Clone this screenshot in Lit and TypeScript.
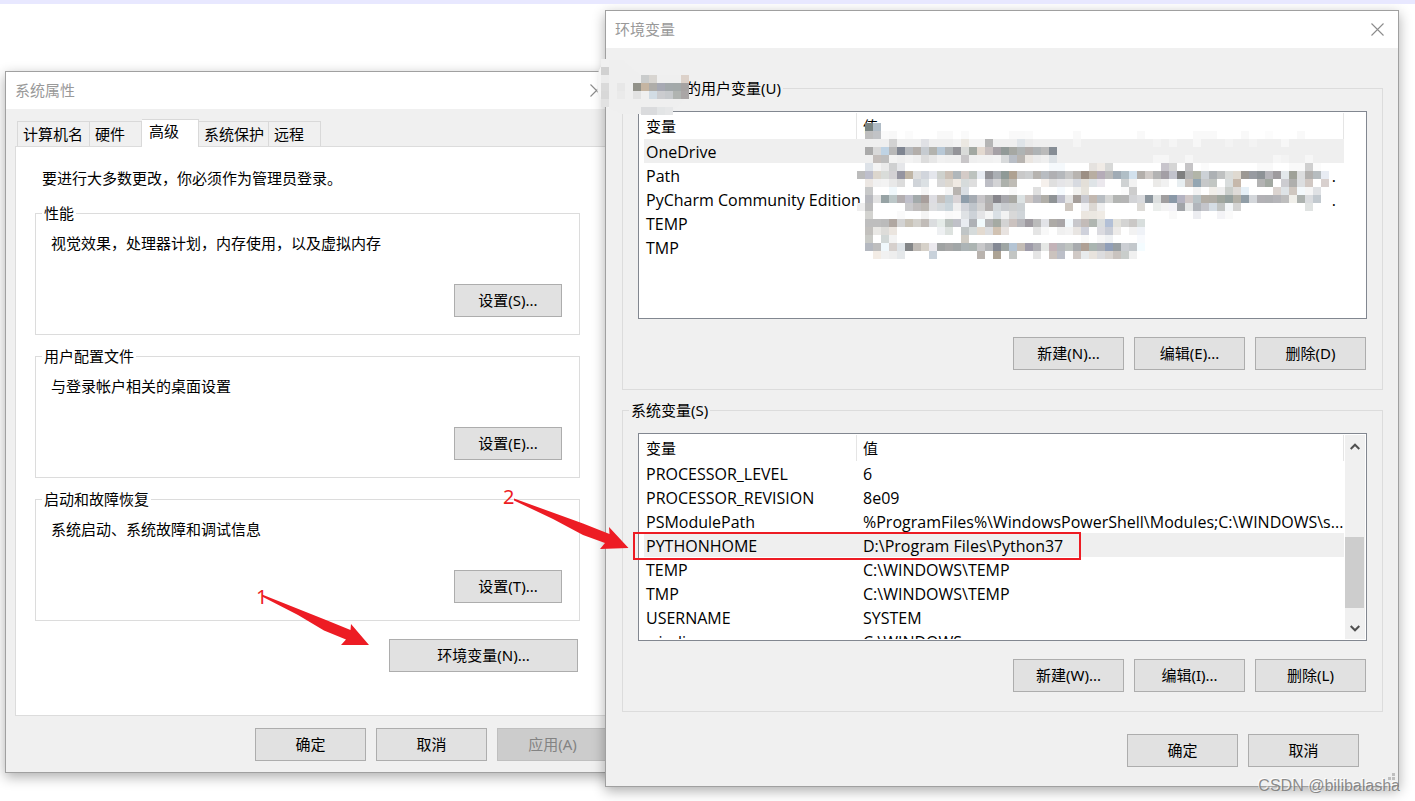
import { LitElement, html, svg, css } from "lit";
import { customElement, property } from "lit/decorators.js";
import { classMap } from "lit/directives/class-map.js";

interface Row {
  name: string;
  value: string;
  selected?: boolean;
  cut?: boolean;
}

const USER_ROWS: Row[] = [
  { name: "OneDrive", value: "", selected: true },
  { name: "Path", value: ".", cut: true },
  { name: "PyCharm Community Edition", value: ".", cut: true },
  { name: "TEMP", value: "" },
  { name: "TMP", value: "" },
];

const SYSTEM_ROWS: Row[] = [
  { name: "PROCESSOR_LEVEL", value: "6" },
  { name: "PROCESSOR_REVISION", value: "8e09" },
  { name: "PSModulePath", value: "%ProgramFiles%\\WindowsPowerShell\\Modules;C:\\WINDOWS\\s..." },
  { name: "PYTHONHOME", value: "D:\\Program Files\\Python37", selected: true },
  { name: "TEMP", value: "C:\\WINDOWS\\TEMP" },
  { name: "TMP", value: "C:\\WINDOWS\\TEMP" },
  { name: "USERNAME", value: "SYSTEM" },
  { name: "windir", value: "C:\\WINDOWS" },
];

const TABS = ["计算机名", "硬件", "高级", "系统保护", "远程"];

const SECTIONS = [
  { title: "性能", text: "视觉效果，处理器计划，内存使用，以及虚拟内存", action: "设置(S)..." },
  { title: "用户配置文件", text: "与登录帐户相关的桌面设置", action: "设置(E)..." },
  { title: "启动和故障恢复", text: "系统启动、系统故障和调试信息", action: "设置(T)..." },
];

// Redaction mosaics: one string per row of 8px cells, "column:colour".
const VALUE_MOSAIC = [
  "0:7a8483 1:b0bcc6",
  "0:bebebe 1:c1c3c6 2:fafafa 3:f8f8f8 5:fbfbfb 9:f9f9f9 10:f9f9f9 12:fafafa 18:f9f9f9 19:f9f9f9 20:fafafa 26:f9f9f9 34:f9f9f9 41:f9f9f9 42:f9f9f9 43:f9f9f9 47:f9f9f9 50:fcfcfc 54:f9f9f9",
  "3:d2d2d2 7:e0e1e5 11:f3f3f3 12:ebe8e2 13:f3f3f3 14:f3f3f3 15:b5b5b5 19:dfe4e8 20:ebebeb 26:f5f5f5 36:f3f3f3 38:f5f5f5 41:f7f7f7 45:f3f3f3 48:f3f3f3 52:f7f7f7",
  "0:aaaaaa 1:d9d9d9 2:bfd3e4 3:b8b8b8 4:7f8591 5:b6b9bd 6:b3aeaa 7:c6cbd0 8:b3b3ae 9:b8c8d6 10:afb3b5 11:949499 12:d9dbd9 13:a2a8a2 14:e3d9d0 15:c7bfbf 16:a6a1a6 17:929a98 18:a6a8a3 19:afb3b3 20:b2adab 21:afb3b5 22:bababa 23:868d95",
  "1:c4bebb 2:bebebe 3:f3f3f3 5:f3f3f3 7:dcdcdc 8:e7e7e7 9:f1f1f1 12:c8c6c8 14:f1f1f1 15:f1f1f1 16:f3f3f3 17:d8dadb 18:b9bec6 19:b8b4b0 20:ebe6e1 21:ebebeb 23:dde2e6 36:f6f6f6 37:f6f6f6 40:f6f6f6 51:f6f6f6 52:f3f3f3 55:f6f6f6",
  "0:dde2e8 1:f4f4f4 2:eaeaea 3:cfd0d1 4:e6e7ea 23:f5f9fc 24:f5f9fc 28:e5e2df 29:f0ebe6 30:d8d9d8 37:c8c5cc 38:d5d5d5 40:c5c4c6 42:fbfbfb 49:f9f9f9 50:f9f9f9 53:f9f9f9 54:f9f9f9 55:cfcfcf 56:fbfbfb",
  "-1:bcbcbc 0:bebfcc 1:dcd6cd 2:d9dcd9 3:d3d1d4 4:9594a0 5:c0b5a5 6:dedede 7:d1d5dc 8:e4e6ec 9:ced1cd 10:cbc0b6 11:b0b7bb 12:d4cbc7 13:bdc3bf 14:e8ecf2 15:929297 16:abafb4 17:8f9a97 18:afa292 19:c9c9c9 20:cccecf 21:b6b3af 22:b8bcc1 23:b0b0b3 24:b5b8bc 25:c7c7c7 26:b8b4b0 27:9c8f84 28:b8aea2 29:b5acb8 30:bababa 31:a0abb5 32:b0bec6 33:d2e1ed 34:b3afab 35:d0cbc8 36:b3b3b3 37:a39fa5 38:c2c3cc 39:7f7f7f 40:b5b5b5 41:b2b5a8 42:ccd1d6 43:adb1b4 44:bfc1c1 45:dadcda 46:dfd9d0 47:9c9893 48:989ba1 49:8d9296 50:b5b4b9 51:9e9b9e 52:e3e8eb 53:9fa198 54:dcddde 55:b2b0ae 56:b6bcbf 57:e8ecf3",
  "0:ece7e3 1:f1f1f1 2:f3f3f3 3:e8e8e8 4:dcdcdc 6:d0d4d9 7:dbe0e3 9:d8d8d8 10:ddd8d0 11:f0eae3 12:d6dbdb 13:dedede 15:bdbec5 16:d3d3d5 17:adb1ac 18:bfbcb5 22:f5f0ec 23:dfdfdf 24:e5e5e8 25:e8e8e8 26:d7dae0 27:e3dfd8 28:dfe4e7 29:ebe8ed 32:cfd2d3 33:f2f2f2 36:ebeae8 37:f1f1f1 39:e8eef1 40:c8c1bc 41:94a6b2 42:c6c8c9 43:c2c6c3 45:d9dddd 46:c6b8ab 49:b3b3b3 50:a2a8a1 52:ccccd0 53:afafad 54:dcdee0 55:d1c8c3 57:d8d0ce",
  "0:c8c9c9 3:f0f8fc 7:f5f5f5 10:f5f5f5 11:b8b4b0 12:dadfe4 18:f9f9f9 21:e0e0e0 24:f5fafe 26:f1f1ef 27:e6e3dc 32:fbfbfb 33:cdcdcd 41:f3f3f3 43:f1eee9 44:eeeeee 45:cacecb 46:dedbd8 47:e6f0f7 51:dbd4d0 52:dee3e6 53:cfc7c0 54:f3f8fb 55:f5f5f5 56:dfe1e4",
  "0:b8b9be 1:e3e3e3 2:97a3a5 3:bcc7c8 4:b3aeb0 5:c0c0cb 6:a3aaab 7:a89f9c 8:dddde2 9:c6c2be 10:c1ccd2 11:d9d4d6 12:8f9eab 13:a5abb2 14:c7c5c8 15:b0b0b0 16:87868c 17:a8a8ad 18:a8a8a3 19:dce2e3 20:cfc8c5 21:b8b8bd 22:b0aea8 23:8f9396 24:bdbeca 25:e3e3e3 26:a59e9a 27:c7c8cf 28:c2b8b0 29:b8bdc2 30:d5d6d5 31:b3b5b3 32:b5b5b5 33:d2d3d6 34:d9dadd 35:8b959d 36:dcdfdf 37:a09e9f 38:8a98a7 39:b4b3c1 40:cfc7c7 41:b8c2c6 42:b3aea6 43:b0ada6 44:a0a69e 45:96a19f 46:b3b1a8 47:919ea7 48:d3d6da 49:b2b1b5 50:b0b1b4 51:b5b5b9 52:bebebe 53:f0efea 54:adb2af 55:dadcdf 56:c2c9cf",
  "-1:eeeeee 0:bcbcbc 5:cacacc 6:c0bdbd 7:bcb8b3 8:dedfe1 9:d5dadd 10:cad5db 11:efefef 12:d2d4da 13:bfc5cb 14:d2d2d2 15:b3afae 16:d3d8db 17:c9ccd0 18:cdcfd0 19:ccd1d4 25:cec7c0 27:f0f0f3 28:dcd8d3 29:f0f0f0 34:dddbd7 36:ebeeec 37:f3f3f3 38:f3f2f7 39:a1a4a8 40:e5e7e7 41:b1b5bb 42:c4c5cb 43:d5dde4 44:c2c5c4 45:f3f6f8 46:d4d4d3 55:e0e3e2",
  "0:d3d3d0 4:fafafa 7:f4f4f4 10:f9f9f9 11:fbfbfb 12:dfe2e5 13:cdd2d8 14:e4e4e6 15:f5f5f5 16:dae0e5 17:f2f2f2 18:d8d8d8 19:d0d5d9 27:ebe6e0 28:ebe8e2 29:efebe5 38:f9f9f9 41:ecedf1 44:f3f3f6 45:fafafa",
  "0:bebebe 1:bebebe 2:bbbbbb 3:b0a7a1 4:d3d3d3 5:c9c3b8 6:d3d1cc 7:c1bcb8 8:dbdddf 9:e5ebe8 10:bcc3bf 11:c0c1c8 12:e9ecf1 13:aeb1b6 14:f2fafc 15:b4b4b6 16:a5aaa3 17:d3d3d3 18:cbc2bf 19:b8b8bc 20:9f9ba1 21:bbbbbb 22:e2e3e7 23:aeaba7 24:a9a6a8 25:f4fafd 26:c8c8cc 27:c3bbb8 28:b0b6b1 29:dadddd 30:b3c0d6 31:e3e2dc 32:d4d4d3 33:cac8c6 34:d8dedd",
  "0:c2c0bd 1:e9e8e5 2:dddcd9 3:ebe5df 9:eef0f2 10:dde2df 12:c0c5c6 13:d6dbdb 14:e3dad0 15:dcdddf 16:d1c2b2 17:e8e3e0 21:e5e5e5 22:f8f8f8 24:f0f0f0 25:f3f3f3 26:e8e5e2 27:cfd1db 29:dbdbe0 30:c9cdd6 31:edebe9 33:f2f2f2 34:eff2f7",
  "0:c9cac6 2:d2d8d7 3:f3f3f3 12:d1cdc5 27:f9f9f9 29:f7f7f7 30:eff1f3 34:f8fafd",
  "0:b4b8c0 1:bebebe 2:f0f8fc 3:d6d0cd 4:dfe4e8 5:838587 6:bfbab5 7:d6d1c9 8:ebe9ee 9:a0a3a3 10:a8a8a8 11:a1a6a7 12:acb4b6 13:acb4b2 14:c8c8ca 15:b3b5b8 16:848994 17:9fa6a4 18:b4c4d4 19:c3bcb5 20:9e9ba9 21:b0b0b5 22:e5e7e5 23:c3b3b8 24:b6b9bd 25:bec3c0 26:a8abae 27:afa095 28:aab5b1 29:acafb5 30:919fb8 31:989fa3 32:cbced3 33:c3c8cc 34:f4fcff",
  "1:f3ece5 2:f1f1f1 3:eeeeee 4:e5e8ea 8:c8d1da 14:b9b3ae 16:ada394 18:c3c6c4 21:e5e5e5 23:cbc3be 24:bcbfc8 26:d0c9c5 27:e8ebed 28:e8e3dd 29:dcdcde 30:d9d5d2 31:c9c3bf 32:c9cdcb 33:f0f0f0",
];

const NAME_MOSAIC = [
  "0:f0f0f0",
  "0:d1d1d1",
  "0:ececec 5:cacccc 6:d8d5d1 10:ddd2ca",
  "0:dadada 2:e7e7e7 4:92928a 5:c5b5a2 6:afada9 7:a7a9b3 8:a3a9ab 9:a3a9a9 10:a7a3a2",
  "0:d8d8d8 2:eaeaea 4:e2e2e2 6:d2dce4 7:cbcccf 8:c6c9cc 9:b0b4b1 10:aaa6a6",
  "0:e2e2e2",
  "5:dadbdd 6:dadbdd 7:e3e5e6 8:e6e7e8",
];

const mosaic = (rows: string[], x: number, y: number) =>
  rows.flatMap((row, j) =>
    row.split(" ").map((cell) => {
      const [col, colour] = cell.split(":");
      return svg`<rect x=${x + Number(col) * 8} y=${y + j * 8} width="8" height="8" fill=${"#" + colour}></rect>`;
    })
  );

const closeIcon = html`<svg width="13" height="13" viewBox="0 0 13 13" aria-hidden="true">
  <path d="M0.5 0.5L12.5 12.5M12.5 0.5L0.5 12.5" fill="none" stroke="#8c8c8c" stroke-width="1.1" />
</svg>`;

const base = css`
  * {
    box-sizing: border-box;
  }
  button {
    height: 33px;
    width: 111px;
    padding: 0;
    border: 1px solid #adadad;
    border-radius: 0;
    background: #e1e1e1;
    color: #000;
    font: inherit;
  }
  button:disabled {
    background: #cccccc;
    border-color: #bfbfbf;
    color: #838383;
  }
  fieldset {
    min-width: 0;
    margin: 0;
    padding: 0;
    border: 1px solid #dcdcdc;
  }
  legend {
    margin-left: 6px;
    padding: 0 2px;
    line-height: 21px;
  }
`;

@customElement("variable-list")
class VariableList extends LitElement {
  @property({ attribute: false }) rows: Row[] = [];
  @property({ type: Boolean }) scrollable = false;
  @property() caption = "";

  static styles = [
    base,
    css`
      :host {
        display: flex;
        height: 208px;
        padding: 1px 1px 1px 5px;
        border: 1px solid #828790;
        background: #fff;
      }
      .view {
        flex: 1;
        min-width: 0;
        overflow: hidden;
      }
      table {
        width: 100%;
        table-layout: fixed;
        border-collapse: separate;
        border-spacing: 0;
      }
      th {
        height: 26px;
        padding: 0 0 0 2px;
        border-right: 1px solid #e5e5e5;
        font-weight: 400;
        text-align: left;
      }
      th.name {
        width: 213px;
      }
      td {
        height: 24px;
        padding: 2px 0 0 2px;
        font-family: "Open Sans", "Noto Sans CJK SC", sans-serif;
        font-size: 16px;
        line-height: 22px;
        white-space: nowrap;
      }
      th + th,
      td + td {
        padding-left: 6px;
      }
      .selected td {
        background: #efefef;
      }
      td.cut {
        padding-right: 8px;
        text-align: right;
      }
      .bar {
        display: flex;
        flex-direction: column;
        width: 20px;
        margin-left: 1px;
      }
      .bar.on {
        background: #f0f0f0;
      }
      .bar button {
        display: grid;
        place-items: center;
        width: 19px;
        height: 22px;
        border: 0;
        background: none;
      }
      .track {
        display: flex;
        flex: 1;
        flex-direction: column;
        justify-content: flex-end;
        padding-bottom: 9px;
      }
      .thumb {
        width: 19px;
        height: 71px;
        background: #cdcdcd;
      }
    `,
  ];

  render() {
    const chevron = (d: string) => html`<svg width="10" height="7" viewBox="0 0 10 7" aria-hidden="true">
      <path d=${d} fill="none" stroke="#505050" stroke-width="2" />
    </svg>`;
    return html`
      <div class="view">
        <table aria-label=${this.caption}>
          <thead>
            <tr><th class="name" scope="col">变量</th><th scope="col">值</th></tr>
          </thead>
          <tbody>
            ${this.rows.map(
              (r) => html`<tr class=${classMap({ selected: !!r.selected })}>
                <td>${r.name}</td><td class=${classMap({ cut: !!r.cut })}>${r.value}</td>
              </tr>`
            )}
          </tbody>
        </table>
      </div>
      <div class=${classMap({ bar: true, on: this.scrollable })}>
        ${this.scrollable
          ? html`<button aria-label="向上滚动">${chevron("M0.7 6L5 1.7L9.3 6")}</button>
              <div class="track"><div class="thumb"></div></div>
              <button aria-label="向下滚动">${chevron("M0.7 1L5 5.3L9.3 1")}</button>`
          : ""}
      </div>
    `;
  }
}

@customElement("app-root")
class AppRoot extends LitElement {
  static styles = [
    base,
    css`
      :host {
        display: block;
        position: relative;
        min-height: 100vh;
        overflow: hidden;
        border-top: 4px solid #e8e8ff;
        background: #fff;
        color: #000;
        font: 15px/21px "Noto Sans", "Noto Sans CJK SC", sans-serif;
      }
      .window {
        position: absolute;
        border: 1px solid #a0a0a0;
        background: #f0f0f0;
        box-shadow: 0 4px 12px rgba(0, 0, 0, 0.32);
      }
      .properties {
        left: 5px;
        top: 67px;
        width: 613px;
      }
      .environment {
        left: 605px;
        right: 16px;
        top: 6px;
      }
      .titlebar {
        display: flex;
        align-items: center;
        justify-content: space-between;
        height: 37px;
        padding: 0 14px 0 9px;
        background: #fff;
        color: #999;
      }
      h2 {
        margin: 0;
        font-size: 15px;
        font-weight: 400;
      }
      .titlebar button {
        display: grid;
        place-items: center;
        width: 13px;
        height: 21px;
        border: 0;
        background: none;
      }
      .properties .body {
        padding: 10px 9px 11px;
      }
      .tabs {
        display: flex;
        align-items: flex-end;
        padding-left: 2px;
      }
      .tabs button {
        width: auto;
        min-width: 52px;
        height: 25px;
        padding: 0 4px 0 5px;
        border: solid #d9d9d9;
        border-width: 1px 1px 0 0;
        background: #f0f0f0;
        text-align: left;
      }
      .tabs button:first-child {
        padding-right: 6px;
        border-left-width: 1px;
      }
      .tabs button.active {
        min-width: 57px;
        height: 28px;
        margin-bottom: -1px;
        padding: 0 7px 4px;
        background: #fff;
      }
      .panel {
        display: flex;
        flex-direction: column;
        gap: 11px;
        padding: 21px 27px 43px 19px;
        border: 1px solid #dcdcdc;
        background: #fff;
      }
      .panel p {
        margin: 0;
      }
      .panel > p {
        margin: 0 0 3px 7px;
      }
      .section {
        display: flex;
        flex-direction: column;
        gap: 30px;
        padding: 9px 17px 17px 15px;
      }
      .section button {
        align-self: flex-end;
        width: 108px;
      }
      .panel > button {
        align-self: flex-end;
        width: 189px;
        margin: 7px 2px 0 0;
      }
      .actions {
        display: flex;
        justify-content: flex-end;
        gap: 10px;
      }
      .properties .actions {
        padding-top: 12px;
      }
      .environment .body {
        display: flex;
        flex-direction: column;
        gap: 10px;
        padding: 30px 15px 19px 16px;
      }
      .group {
        display: flex;
        flex-direction: column;
        gap: 18px;
        padding: 12px 15px 19px;
      }
      .group .actions {
        padding-right: 1px;
      }
      .hidden-name {
        display: inline-block;
        width: 55px;
      }
      .footer {
        padding: 12px 24px 0 0;
      }
      .marks {
        position: absolute;
        left: 0;
        top: -4px;
        pointer-events: none;
      }
      .mark {
        fill: #ed1c24;
        font: 20px "Noto Sans", sans-serif;
      }
      .watermark {
        position: absolute;
        right: 15px;
        bottom: 8px;
        color: rgba(120, 120, 120, 0.85);
        font: 16px/22px "Liberation Sans", sans-serif;
        text-shadow: -1px -1px 0 rgba(255, 255, 255, 0.8);
      }
    `,
  ];

  private titlebar(title: string) {
    return html`<header class="titlebar">
      <h2>${title}</h2>
      <button aria-label="关闭">${closeIcon}</button>
    </header>`;
  }

  private buttons(labels: string[]) {
    return labels.map((label) => html`<button>${label}</button>`);
  }

  render() {
    return html`
      <section class="window properties">
        ${this.titlebar("系统属性")}
        <div class="body">
          <div class="tabs" role="tablist">
            ${TABS.map(
              (tab) => html`<button
                role="tab"
                aria-selected=${tab === "高级"}
                class=${classMap({ active: tab === "高级" })}
              >${tab}</button>`
            )}
          </div>
          <div class="panel" role="tabpanel">
            <p>要进行大多数更改，你必须作为管理员登录。</p>
            ${SECTIONS.map(
              (s) => html`<fieldset>
                <legend>${s.title}</legend>
                <div class="section">
                  <p>${s.text}</p>
                  <button>${s.action}</button>
                </div>
              </fieldset>`
            )}
            <button>环境变量(N)...</button>
          </div>
          <div class="actions">
            ${this.buttons(["确定", "取消"])}
            <button disabled>应用(A)</button>
          </div>
        </div>
      </section>

      <section class="window environment">
        ${this.titlebar("环境变量")}
        <div class="body">
          <fieldset>
            <legend><span class="hidden-name"></span>的用户变量(U)</legend>
            <div class="group">
              <variable-list caption="用户变量" .rows=${USER_ROWS}></variable-list>
              <div class="actions">${this.buttons(["新建(N)...", "编辑(E)...", "删除(D)"])}</div>
            </div>
          </fieldset>
          <fieldset>
            <legend>系统变量(S)</legend>
            <div class="group">
              <variable-list caption="系统变量" scrollable .rows=${SYSTEM_ROWS}></variable-list>
              <div class="actions">${this.buttons(["新建(W)...", "编辑(I)...", "删除(L)"])}</div>
            </div>
          </fieldset>
          <div class="actions footer">${this.buttons(["确定", "取消"])}</div>
        </div>
      </section>

      <svg class="marks" width="1415" height="801" viewBox="0 0 1415 801" aria-hidden="true">
        <path d="M606 60C599 66 597 76 597 86C597 96 602 105 609 109L622 114H660Q674 112 680 104Q690 96 688 75H640L622 60Z" fill="#efefef" />
        <path d="M606 60Q596 70 597 84T609 109V60Z" fill="#f4f4f4" />
        <g shape-rendering="crispEdges">
          ${mosaic(NAME_MOSAIC, 601, 59)} ${mosaic(VALUE_MOSAIC, 865, 123)}
        </g>
        <rect x="634" y="533" width="446" height="26" fill="none" stroke="#ed1c24" stroke-width="2" />
        <path class="mark" d="M514 498.500L583 523.500L609.500 534L609 527L628.500 548L600 549L605 543L583 535L553 519L514 500.500Z" />
        <path class="mark" d="M262 594.500L326 620L350.500 630L351 624L369 645L341 645L346 639.500L324 630.500L298 615L262 596.500Z" />
        <text class="mark" x="503" y="504">2</text>
        <text class="mark" x="256" y="604">1</text>
        <path d="M1392 773h3v3h-3zM1388 777h3v3h-3zM1392 777h3v3h-3z" fill="#bfbfbf" />
      </svg>
      <div class="watermark">CSDN @bilibalasha</div>
    `;
  }
}
